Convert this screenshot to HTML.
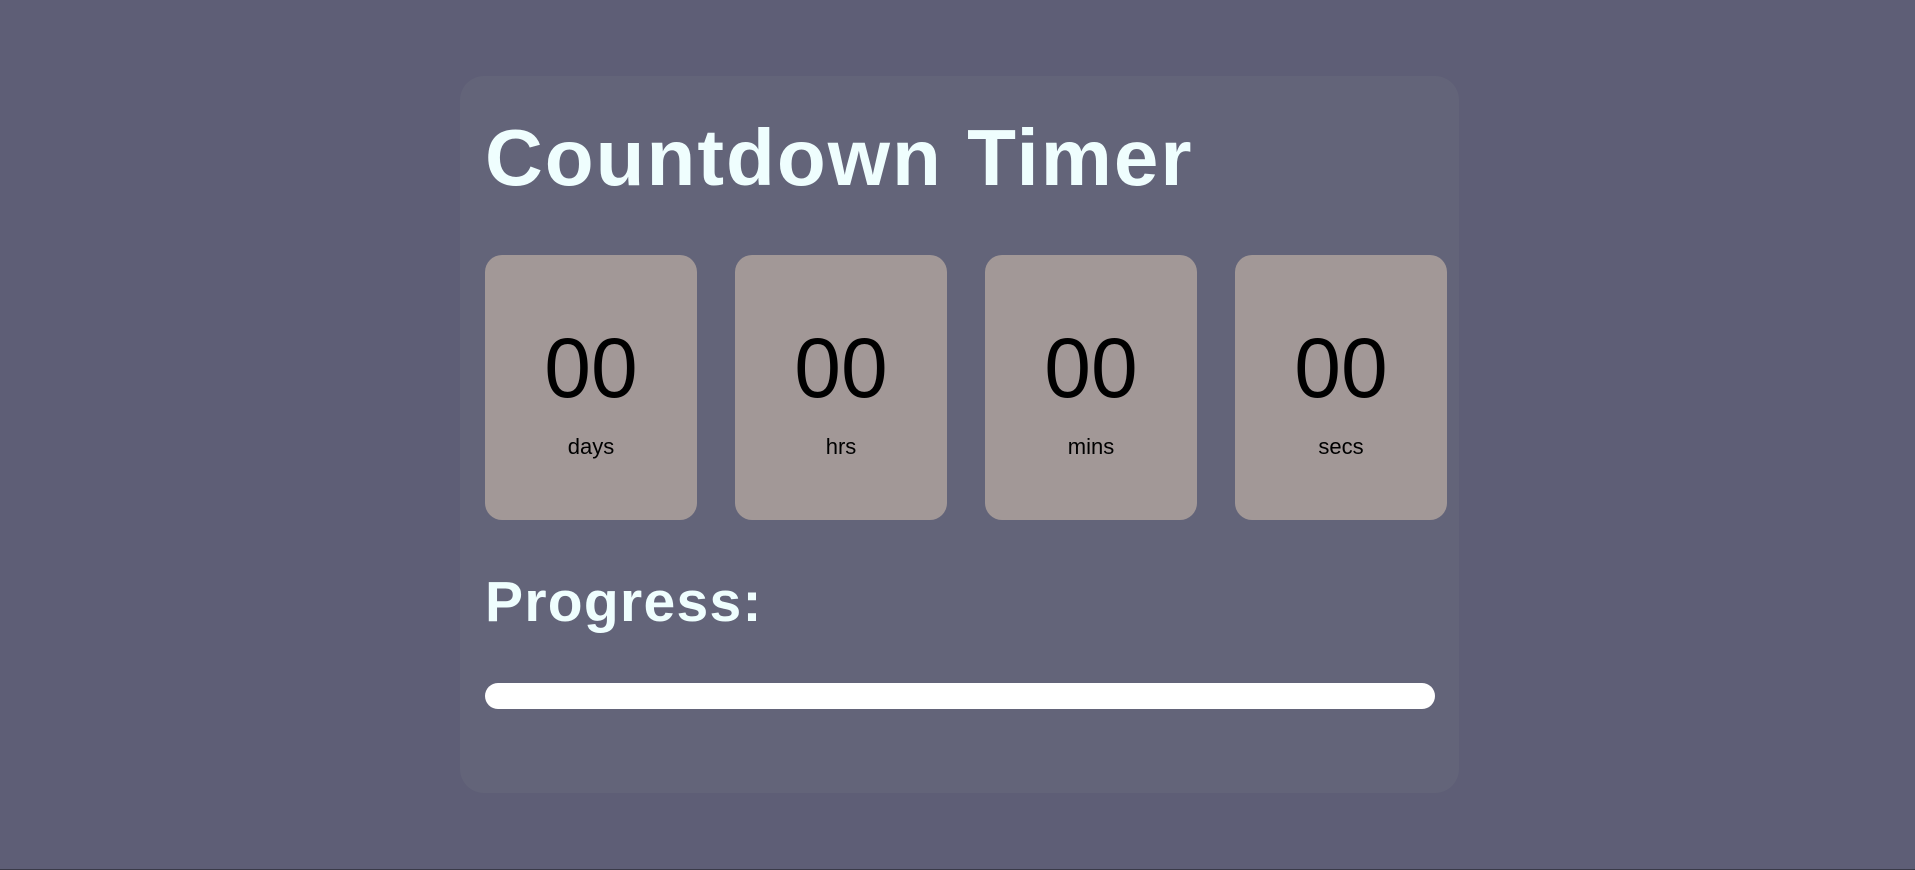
<!DOCTYPE html>
<html><head><meta charset="utf-8"><style>
html,body{margin:0;padding:0}
body{width:1915px;height:870px;background:#5e5e76;position:relative;overflow:hidden;font-family:"Liberation Sans",sans-serif}
.bottom{position:absolute;left:0;right:0;bottom:0;height:1px;background:#3a3a48}
.card{position:absolute;left:460px;top:76px;width:999px;height:717px;background:#636479;border-radius:24px}
h1{position:absolute;left:485px;top:108px;margin:0;font-size:80px;line-height:100px;font-weight:bold;color:#effefe;letter-spacing:2px;white-space:nowrap}
.box{position:absolute;top:255px;width:212px;height:265px;background:#a29897;border-radius:17px;text-align:center;color:#000}
.num{position:absolute;top:320px;width:212px;font-size:84px;line-height:96px;text-align:center}
.lbl{position:absolute;top:432px;width:212px;font-size:22px;line-height:30px;text-align:center}
h2{position:absolute;left:485px;top:567px;margin:0;font-size:57px;line-height:70px;font-weight:bold;color:#effefe;letter-spacing:1.3px;white-space:nowrap}
.bar{position:absolute;left:485px;top:683px;width:950px;height:26px;background:#fff;border-radius:13px}
</style></head><body>
<div class="card"></div>
<h1>Countdown Timer</h1>
<div class="box" style="left:485px"></div>
<div class="box" style="left:735px"></div>
<div class="box" style="left:985px"></div>
<div class="box" style="left:1235px"></div>
<div class="num" style="left:485px">00</div>
<div class="num" style="left:735px">00</div>
<div class="num" style="left:985px">00</div>
<div class="num" style="left:1235px">00</div>
<div class="lbl" style="left:485px">days</div>
<div class="lbl" style="left:735px">hrs</div>
<div class="lbl" style="left:985px">mins</div>
<div class="lbl" style="left:1235px">secs</div>
<h2>Progress:</h2>
<div class="bar"></div>
<div class="bottom"></div>
</body></html>
